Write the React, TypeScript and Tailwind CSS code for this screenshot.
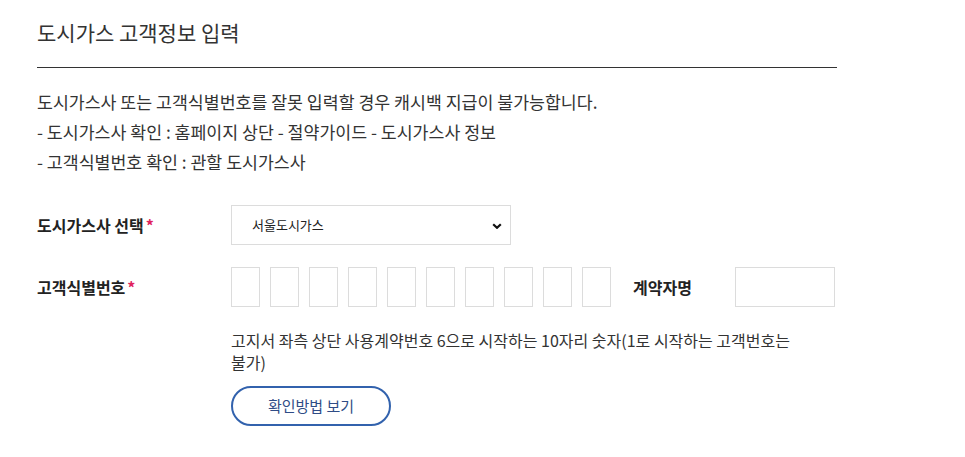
import { useState } from "react";

const font = { fontFamily: '"Noto Sans CJK KR", "Noto Sans", sans-serif' };

const Required = () => <span className="ml-[2px] text-[#e0245e]">*</span>;

const App = () => {
    const [company, setCompany] = useState("서울도시가스");
    const [digits, setDigits] = useState<string[]>(Array(10).fill(""));
    const [name, setName] = useState("");

    const onChangeDigit = (idx: number, value: string) => {
        setDigits((prev) => {
            const next = [...prev];
            next[idx] = value.slice(-1);
            return next;
        });
    };

    return (
        <div className="min-h-screen bg-white text-[#333]" style={font}>
            <div className="w-[837px] pl-[37px]">
                <h2 className="border-b border-[#333] pt-[18px] pb-[21px] text-[21px] leading-[28px] text-[#333]">
                    도시가스 고객정보 입력
                </h2>
                <div className="mt-[19px] text-[17.3px] leading-[30px] text-[#333]">
                    <p>도시가스사 또는 고객식별번호를 잘못 입력할 경우 캐시백 지급이 불가능합니다.</p>
                    <p>- 도시가스사 확인 : 홈페이지 상단 - 절약가이드 - 도시가스사 정보</p>
                    <p>- 고객식별번호 확인 : 관할 도시가스사</p>
                </div>

                <div className="mt-[28px] flex h-10 items-center">
                    <label className="w-[194px] text-[16px] font-bold text-[#222]">
                        도시가스사 선택
                        <Required />
                    </label>
                    <div className="relative h-10 w-[280px]">
                        <select
                            className="h-full w-full appearance-none border border-[#dcdcdc] bg-white pl-[20px] text-[13px] text-[#222] focus:outline-none"
                            value={company}
                            onChange={(e) => setCompany(e.target.value)}
                        >
                            <option>서울도시가스</option>
                            <option>코원에너지서비스</option>
                            <option>예스코</option>
                            <option>귀뚜라미에너지</option>
                        </select>
                        <svg
                            className="pointer-events-none absolute right-[9px] top-[18px]"
                            width="10"
                            height="6"
                            viewBox="0 0 10 6"
                        >
                            <path d="M1.2 1.2 5 4.8 8.8 1.2" fill="none" stroke="#111" strokeWidth="2.2" />
                        </svg>
                    </div>
                </div>

                <div className="mt-[22px] flex h-10 items-center">
                    <label className="w-[194px] text-[16px] font-bold text-[#222]">
                        고객식별번호
                        <Required />
                    </label>
                    <div className="flex gap-[10px]">
                        {digits.map((d, i) => (
                            <input
                                key={i}
                                className="h-10 w-[29px] border border-[#dcdcdc] bg-white text-center text-[15px] focus:outline-none"
                                type="text"
                                value={d}
                                onChange={(e) => onChangeDigit(i, e.target.value)}
                            />
                        ))}
                    </div>
                    <span className="ml-[22px] w-[102px] text-[16px] font-bold text-[#222]">계약자명</span>
                    <input
                        className="h-10 w-[100px] border border-[#dcdcdc] bg-white px-2 text-[15px] focus:outline-none"
                        type="text"
                        value={name}
                        onChange={(e) => setName(e.target.value)}
                    />
                </div>

                <div className="pl-[194px]">
                    <p className="mt-[22px] w-[585px] break-keep text-[16px] leading-[22px] text-[#333]">
                        고지서 좌측 상단 사용계약번호 6으로 시작하는 10자리 숫자(1로 시작하는 고객번호는 불가)
                    </p>
                    <button className="mt-[13px] h-10 w-40 rounded-full border-2 border-[#3262ad] bg-white text-[15px] text-[#2f4c86]">
                        확인방법 보기
                    </button>
                </div>
            </div>
        </div>
    );
};

export default App;
